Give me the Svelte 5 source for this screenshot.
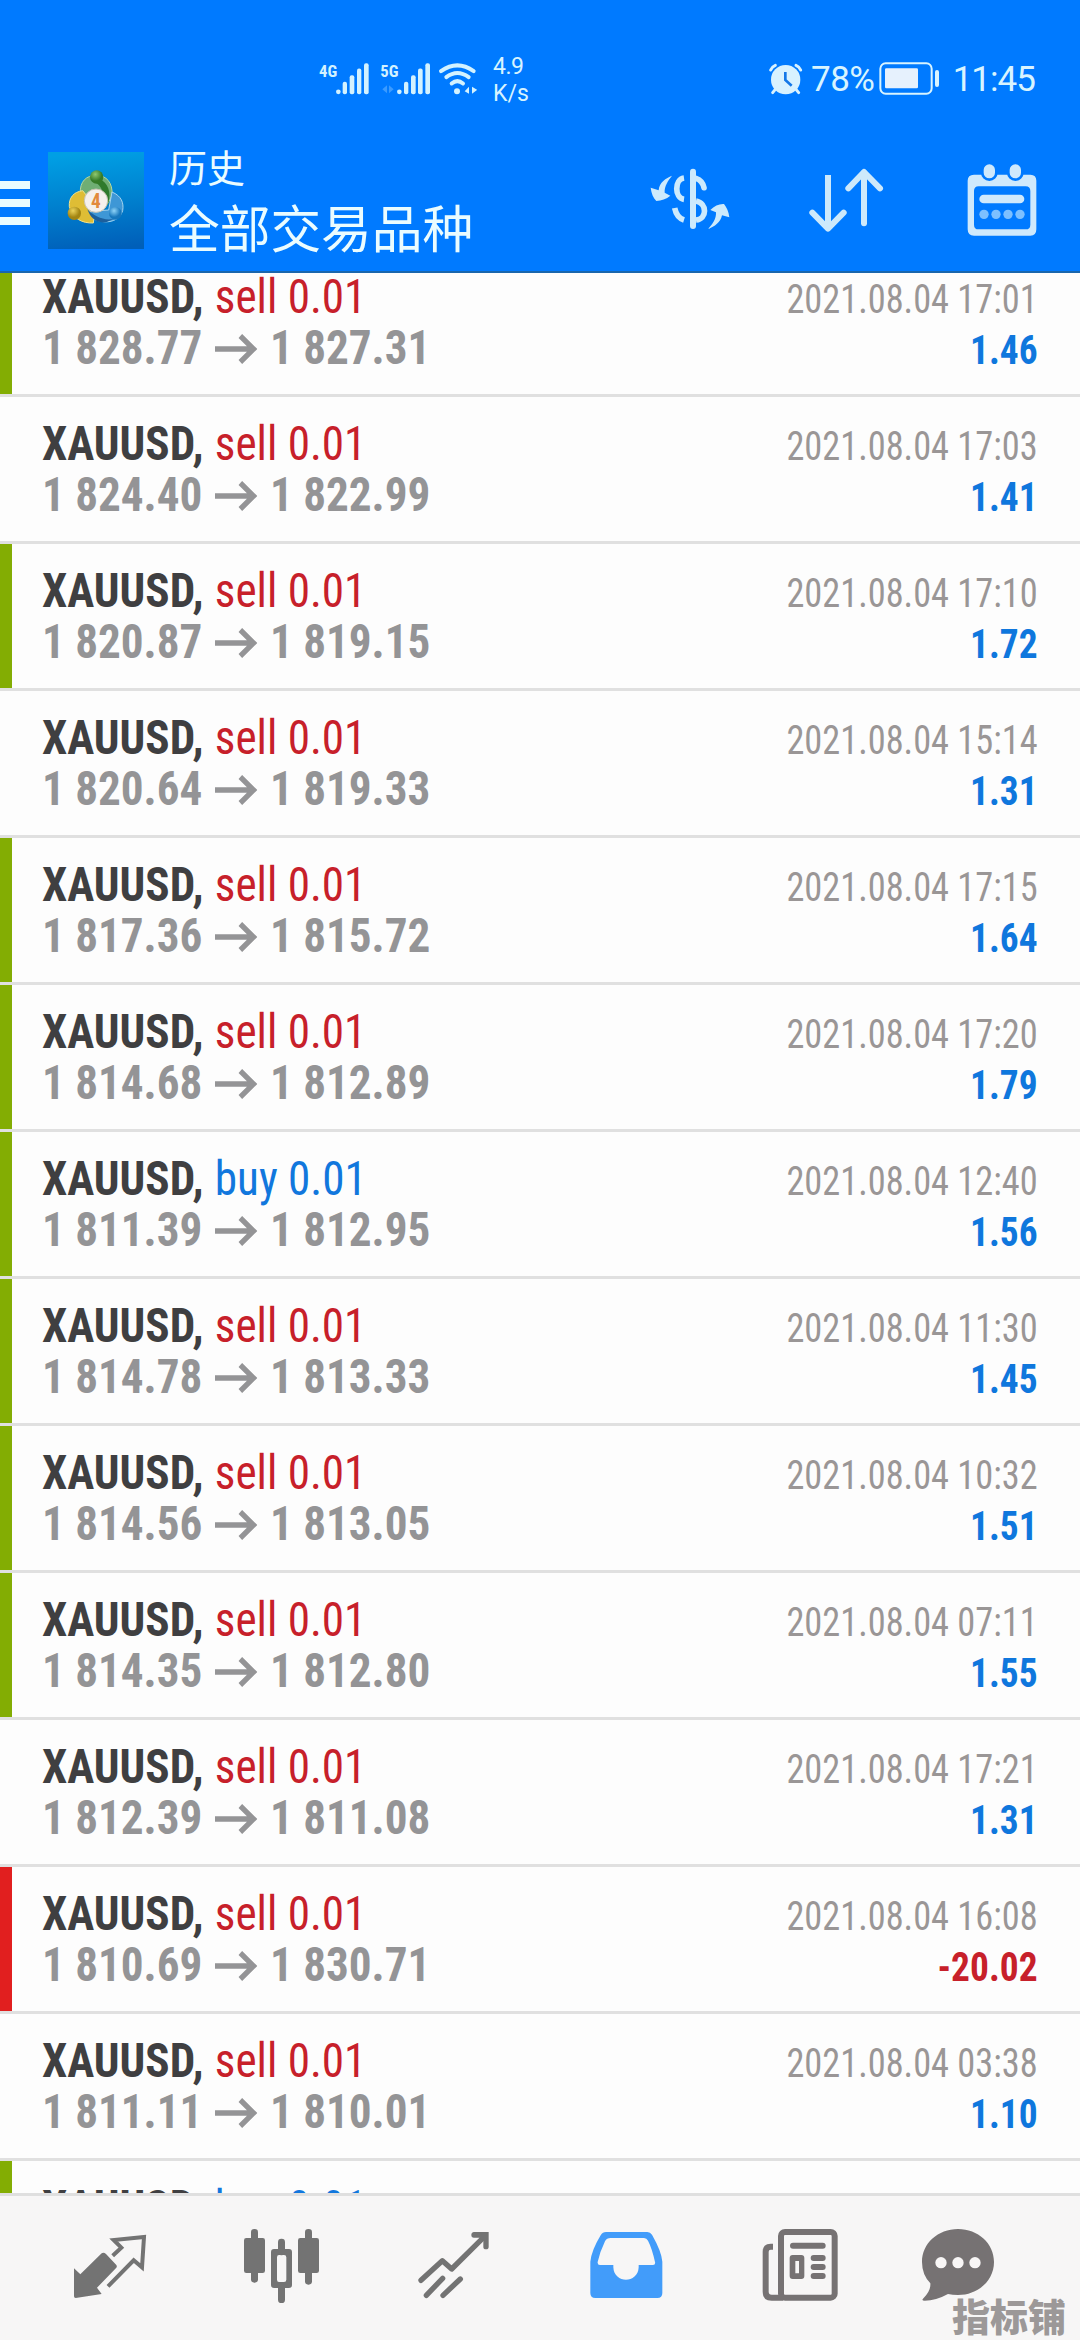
<script>
  // bar: coloured marker on the left edge of the row
  const deals = [
    { side: 'sell', open: '1 828.77', close: '1 827.31', time: '2021.08.04 17:01', profit: '1.46', bar: 'green' },
    { side: 'sell', open: '1 824.40', close: '1 822.99', time: '2021.08.04 17:03', profit: '1.41' },
    { side: 'sell', open: '1 820.87', close: '1 819.15', time: '2021.08.04 17:10', profit: '1.72', bar: 'green' },
    { side: 'sell', open: '1 820.64', close: '1 819.33', time: '2021.08.04 15:14', profit: '1.31' },
    { side: 'sell', open: '1 817.36', close: '1 815.72', time: '2021.08.04 17:15', profit: '1.64', bar: 'green' },
    { side: 'sell', open: '1 814.68', close: '1 812.89', time: '2021.08.04 17:20', profit: '1.79', bar: 'green' },
    { side: 'buy',  open: '1 811.39', close: '1 812.95', time: '2021.08.04 12:40', profit: '1.56', bar: 'green' },
    { side: 'sell', open: '1 814.78', close: '1 813.33', time: '2021.08.04 11:30', profit: '1.45', bar: 'green' },
    { side: 'sell', open: '1 814.56', close: '1 813.05', time: '2021.08.04 10:32', profit: '1.51', bar: 'green' },
    { side: 'sell', open: '1 814.35', close: '1 812.80', time: '2021.08.04 07:11', profit: '1.55', bar: 'green' },
    { side: 'sell', open: '1 812.39', close: '1 811.08', time: '2021.08.04 17:21', profit: '1.31' },
    { side: 'sell', open: '1 810.69', close: '1 830.71', time: '2021.08.04 16:08', profit: '-20.02', bar: 'red' },
    { side: 'sell', open: '1 811.11', close: '1 810.01', time: '2021.08.04 03:38', profit: '1.10' },
    { side: 'buy', bar: 'green' }
  ]
</script>

<div class="screen">
  <header>
    <!-- ── Status bar ── -->
    <div class="status">
      <svg class="signals" viewBox="50 40 480 140">
        <g fill="#d3f2ff">
          <text x="56" y="108" class="net">4G</text>
          <text x="240" y="108" class="net">5G</text>
          <circle cx="114" cy="153" r="7" />
          <rect x="127" y="123" width="13" height="37" rx="6" />
          <rect x="148" y="103" width="14" height="57" rx="6" />
          <rect x="170" y="83" width="13" height="77" rx="6" />
          <rect x="191" y="67" width="14" height="93" rx="6" />
          <circle cx="297" cy="153" r="7" />
          <rect x="311" y="123" width="13" height="37" rx="6" />
          <rect x="332" y="103" width="14" height="57" rx="6" />
          <rect x="353" y="83" width="14" height="77" rx="6" />
          <rect x="375" y="67" width="14" height="93" rx="6" />
          <circle cx="470" cy="151" r="9" />
          <path d="M506 138v21l-13-8zM515 138v21l16-12z" />
        </g>
        <path d="M260 133v24l-14-12zM266 133v24l14-12z" fill="#3b9bff" />
        <g fill="none" stroke="#d3f2ff" stroke-width="12" stroke-linecap="round">
          <path d="M422 91Q471 56 520 91" />
          <path d="M438 109Q471 84 505 109" />
          <path d="M454 128Q471 114 488 128" />
        </g>
      </svg>
      <div class="speed"><span>4.9</span><span>K/s</span></div>
      <svg class="alarm" viewBox="80 60 105 105">
        <circle cx="133" cy="116" r="44" fill="#d8f2ff" />
        <g fill="none" stroke="#d8f2ff" stroke-width="9" stroke-linecap="round">
          <path d="M88 87q4-10 14-14M164 73q10 4 14 14M102 145l-8 10M164 145l8 10" />
        </g>
        <path d="M132 93v24l19 17" fill="none" stroke="#1478e8" stroke-width="8" />
      </svg>
      <span class="percent">78%</span>
      <svg class="battery" viewBox="417 62 185 105">
        <rect x="421" y="69" width="154" height="91" rx="16" fill="none" stroke="#d8f4ff" stroke-width="6" />
        <rect x="435" y="84" width="99" height="60" rx="4" fill="#e6f1fd" />
        <rect x="585" y="89" width="12" height="51" rx="6" fill="#d8f4ff" />
      </svg>
      <span class="clock">11:45</span>
    </div>

    <!-- ── Toolbar ── -->
    <div class="toolbar">
      <div class="menu"><i></i><i></i><i></i></div>
      <svg class="logo" viewBox="144 66 288 291">
        <defs>
          <linearGradient id="bg" x1="0.5" y1="0" x2="0.6" y2="1">
            <stop offset="0" stop-color="#009fe4" />
            <stop offset="0.5" stop-color="#0081cf" />
            <stop offset="1" stop-color="#005fb9" />
          </linearGradient>
          <radialGradient id="green" cx="0.4" cy="0.3"><stop offset="0" stop-color="#8fc870" /><stop offset="1" stop-color="#357b28" /></radialGradient>
          <radialGradient id="gold" cx="0.4" cy="0.3"><stop offset="0" stop-color="#ecd35a" /><stop offset="1" stop-color="#a38512" /></radialGradient>
          <radialGradient id="sky" cx="0.4" cy="0.3"><stop offset="0" stop-color="#8fd3f7" /><stop offset="1" stop-color="#1777bd" /></radialGradient>
        </defs>
        <rect x="144" y="66" width="288" height="291" fill="url(#bg)" />
        <path d="M241 190c-2-36 18-54 48-54s50 22 47 60l-12 24-70-14z" fill="#6fae74" stroke="#b5d7a0" stroke-width="3" />
        <path d="M300 148c22 10 36 36 24 76l-14 6c6-30-2-58-20-70z" fill="#2f7a2c" />
        <path d="M248 182c-28 4-42 22-40 48 10 36 38 50 72 49l6-50z" fill="#dfbd35" stroke="#f2e28b" stroke-width="3" />
        <path d="M336 186c28 12 36 32 32 56-10 32-48 42-84 26l-14-24 56-4z" fill="#3e97d6" stroke="#a5d5ef" stroke-width="3" />
        <path d="M262 238c20 22 54 36 80 28l-22 10c-28 6-48-10-58-38z" fill="#1c5f9c" />
        <circle cx="290" cy="141" r="20" fill="url(#green)" />
        <circle cx="223" cy="250" r="20" fill="url(#gold)" />
        <circle cx="346" cy="250" r="19" fill="url(#sky)" />
        <circle cx="288" cy="212" r="35" fill="#f5f0ec" stroke="#c7c3b4" stroke-width="3" />
        <text x="288" y="233" class="four">4</text>
      </svg>
      <div class="titles">
        <span class="sub">历史</span>
        <span class="main">全部交易品种</span>
      </div>
      <div class="actions">
        <svg viewBox="90 60 240 240">
          <g fill="none" stroke="#cdeafc" stroke-width="17">
            <path d="M192 114C163 118 163 174 192 178" />
            <path d="M164 204Q170 233 192 240" />
            <path d="M228 115Q248 122 252 143" stroke-linecap="round" />
            <path d="M228 183C262 190 262 236 228 240" />
            <path d="M219 95V258" stroke-linecap="round" stroke-width="18" />
          </g>
          <g fill="#cdeafc">
            <path d="M156 107C138 115 118 126 116 151L92 143C94 160 100 174 109 183C124 182 139 177 151 167L134 158C133 138 144 122 156 107Z" />
            <path d="M264 267C284 260 302 247 306 226L328 232C326 214 320 202 312 192C298 191 283 197 271 210L288 217C289 236 279 252 264 267Z" />
          </g>
        </svg>
        <svg viewBox="558 60 240 240">
          <g fill="none" stroke="#cde9fb" stroke-width="18" stroke-linecap="round" stroke-linejoin="round">
            <path d="M624 105V264" stroke-linecap="butt" />
            <path d="M577 218L624 266L671 218" />
            <path d="M732 98V250" />
            <path d="M685 145L732 96L780 145" />
          </g>
        </svg>
        <svg viewBox="1026 60 240 240">
          <path fill="#cfe9fc" fill-rule="evenodd" d="M1062 104H1231Q1249 104 1249 122V268Q1249 287 1231 287H1062Q1043 287 1043 268V122Q1043 104 1062 104ZM1076 139Q1062 139 1062 153V254Q1062 268 1076 268H1217Q1231 268 1231 254V153Q1231 139 1217 139Z" />
          <g fill="#cfe9fc" stroke="#007aff" stroke-width="8">
            <rect x="1087" y="69" width="42" height="50" rx="21" />
            <rect x="1165" y="69" width="42" height="50" rx="21" />
          </g>
          <rect x="1078" y="164" width="135" height="26" rx="13" fill="#cfe9fc" />
          <g fill="#7dc0ff">
            <circle cx="1092" cy="223" r="14" /><circle cx="1128" cy="223" r="14" />
            <circle cx="1164" cy="223" r="14" /><circle cx="1200" cy="223" r="14" />
          </g>
        </svg>
      </div>
    </div>
  </header>

  <!-- ── History list, scrolled slightly ── -->
  <main>
    <div class="list">
      {#each deals as deal}
        <div class="row {deal.bar ?? ''}">
          <div class="left">
            <div class="symbol">XAUUSD, <span class={deal.side}>{deal.side} 0.01</span></div>
            {#if deal.open}
              <div class="prices">
                {deal.open}
                <svg viewBox="0 0 45 30">
                  <path d="M0 15H41M27 2L41 15L27 28" fill="none" stroke="currentColor" stroke-width="5.6" />
                </svg>
                {deal.close}
              </div>
            {/if}
          </div>
          {#if deal.time}
            <div class="right">
              <div class="time">{deal.time}</div>
              <div class="profit" class:loss={deal.profit.startsWith('-')}>{deal.profit}</div>
            </div>
          {/if}
        </div>
      {/each}
    </div>
  </main>

  <!-- ── Bottom tabs ── -->
  <nav>
    <svg viewBox="90 120 240 270">
      <path fill="#737373" d="M190 218Q194 218 198 222L229 255Q232 259 229 263L171 323L185 342L107 354Q102 354 102 349V265L121 283L185 220Q187 218 190 218Z" />
      <path d="M218 227L244 203L221 180L312 171L306 262L281 241L204 319" fill="none" stroke="#737373" stroke-width="12" />
    </svg>
    <svg viewBox="606 120 240 270">
      <g fill="#737373">
        <rect x="612" y="174" width="63" height="105" rx="7" />
        <rect x="774" y="174" width="63" height="105" rx="7" />
        <rect x="633" y="147" width="21" height="161" rx="10" />
        <rect x="795" y="147" width="21" height="167" rx="10" />
        <rect x="714" y="176" width="21" height="50" rx="10" />
        <rect x="714" y="310" width="21" height="59" rx="10" />
        <path fill-rule="evenodd" d="M702 207H747Q756 207 756 216V315Q756 324 747 324H702Q693 324 693 315V216Q693 207 702 207ZM717 225Q711 225 711 232V299Q711 306 717 306H732Q739 306 739 299V232Q739 225 732 225Z" />
      </g>
    </svg>
    <svg viewBox="1122 120 240 270">
      <g fill="none" stroke="#737373" stroke-width="16" stroke-linecap="round">
        <path d="M1143 301L1207 242L1235 267L1330 173" stroke-linejoin="round" />
        <path d="M1159 346L1208 295M1209 346L1261 297" />
      </g>
      <path fill="#737373" d="M1302 156H1346V200Q1346 208 1338 208T1330 200V182L1318 173H1302Q1294 173 1294 165T1302 156Z" />
    </svg>
    <svg viewBox="18 120 240 270">
      <path fill="#429cfa" fill-rule="evenodd" d="M78 156H202Q211 156 216 164Q245 215 247 245V339Q247 354 232 354H46Q31 354 31 339V245Q35 210 62 166Q68 156 78 156ZM92 174Q80 174 75 184Q60 215 53 246Q52 255 60 255H100V262C102 312 174 312 176 262V255H219Q227 255 225 246Q216 205 204 182Q200 174 192 174Z" />
    </svg>
    <svg viewBox="534 120 240 270">
      <g fill="none" stroke="#767273" stroke-width="18">
        <rect x="603" y="156" width="161" height="197" rx="12" />
        <path d="M579 200H572Q557 200 557 215V335Q557 353 575 353H610" />
      </g>
      <g fill="#767273">
        <rect x="630" y="188" width="107" height="18" rx="9" />
        <path fill-rule="evenodd" d="M638 225H664Q673 225 673 234V288Q673 297 664 297H638Q629 297 629 288V234Q629 225 638 225ZM646 243V280H657V243Z" />
        <rect x="692" y="225" width="45" height="18" rx="9" />
        <rect x="692" y="252" width="45" height="18" rx="9" />
        <rect x="692" y="279" width="45" height="18" rx="9" />
      </g>
    </svg>
    <svg viewBox="1014 120 240 270">
      <path fill="#767273" d="M1134 147C1194 147 1242 190 1242 246S1194 345 1134 345Q1117 345 1104 342Q1068 362 1034 362Q1024 362 1029 356Q1053 333 1051 310Q1026 284 1026 246C1026 190 1074 147 1134 147Z" />
      <g fill="#f8f6f6"><circle cx="1083" cy="248" r="17" /><circle cx="1134" cy="248" r="17" /><circle cx="1185" cy="248" r="17" /></g>
    </svg>
    <span class="watermark">指标铺</span>
  </nav>
</div>

<style>
  :global(body) { background: #fdfdfd; }

  .screen {
    width: 1080px;
    height: 2340px;
    display: flex;
    flex-direction: column;
    overflow: hidden;
    background: #fdfdfd;
    font-family: "Roboto Condensed", Roboto, "Noto Sans CJK SC", sans-serif;
  }

  header {
    box-sizing: border-box;
    height: 273px;
    background: #007aff;
    border-bottom: 2px solid #1a66ad;
    color: #eafcff;
    flex: none;
  }

  .status {
    display: flex;
    align-items: center;
    height: 130px;
    box-sizing: border-box;
    padding: 29px 0 0 317px;
    font-family: Roboto, sans-serif;
    font-size: 35px;
    color: #d8f4ff;
  }
  .signals { width: 160px; height: 47px; margin-top: -4px; flex: none; }
  .net { font: 700 50px "Roboto Condensed", sans-serif; }
  .speed { display: flex; flex-direction: column; font-size: 23px; line-height: 27px; margin: 0 0 0 16px; width: 275px; }
  .speed span:first-child { letter-spacing: -0.5px; }
  .alarm { width: 35px; height: 35px; margin-top: -2px; flex: none; }
  .percent { margin-left: 8px; width: 68px; letter-spacing: -0.5px; }
  .battery { width: 61.7px; height: 35px; margin-top: -2px; flex: none; }
  .clock { margin-left: 12px; letter-spacing: -1px; }

  .toolbar { display: flex; height: 141px; }
  .menu { width: 30px; margin: 51px 18px 0 0; display: flex; flex-direction: column; gap: 10px; }
  .menu i { height: 8px; background: #eafcff; }
  .logo { width: 96px; height: 97px; margin-top: 22px; flex: none; }
  .four { font: 700 58px "Roboto Condensed", sans-serif; fill: #e28a3c; text-anchor: middle; }
  .titles { display: flex; flex-direction: column; margin: 14px 0 0 25px; font-family: "Noto Sans CJK SC", sans-serif; flex: 1; white-space: nowrap; }
  .sub { font-size: 38px; line-height: 44px; }
  .main { font-size: 50.7px; line-height: 77px; }
  .actions { display: flex; gap: 76px; padding: 30px 38px 0 0; }
  .actions svg { width: 80px; height: 80px; }

  main { height: 1920px; overflow: hidden; flex: none; }
  .list { margin-top: -23px; }

  .row {
    display: flex;
    justify-content: space-between;
    box-sizing: border-box;
    height: 147px;
    padding: 0 42px 0 31px;
    border-bottom: 3px solid #e0e0e0;
  }
  .row::before { content: ''; width: 12px; margin-left: -31px; }
  .green::before { background: #83ad03; }
  .red::before { background: #e11f1f; }

  .left { flex: 1; margin-left: 30px; padding-top: 21px; font-size: 48px; line-height: 51px; transform: scaleX(0.94); transform-origin: left; white-space: nowrap; }
  .symbol { font-weight: 700; color: #3f3f41; }
  .symbol span { font-weight: 440; margin-left: 1px; }
  .sell { color: #c7202a; }
  .buy { color: #1177dd; }
  .prices { display: flex; align-items: center; font-weight: 700; color: #949496; }
  .prices svg { width: 45px; height: 30px; margin: 2px 14px 0 13px; }

  .right { padding-top: 24px; font-size: 40px; line-height: 51px; text-align: right; }
  .time { color: #9a9696; transform: scaleX(0.908); transform-origin: right; white-space: nowrap; }
  .profit { font-weight: 700; color: #0f77dd; transform: scaleX(0.935); transform-origin: right; }
  .profit.loss { color: #c7202a; }

  nav {
    position: relative;
    box-sizing: border-box;
    height: 147px;
    display: grid;
    grid-template-columns: repeat(5, 172px) 148px;
    justify-items: center;
    padding: 24px 0 0 24px;
    border-top: 3px solid #dfdfdf;
    background: #f7f6f6;
    flex: none;
  }
  nav svg { width: 80px; height: 90px; }
  .watermark {
    position: absolute;
    right: 14px;
    bottom: 6px;
    font: 900 38px/38px "Noto Sans CJK SC", sans-serif;
    color: #9c9898;
  }
</style>
